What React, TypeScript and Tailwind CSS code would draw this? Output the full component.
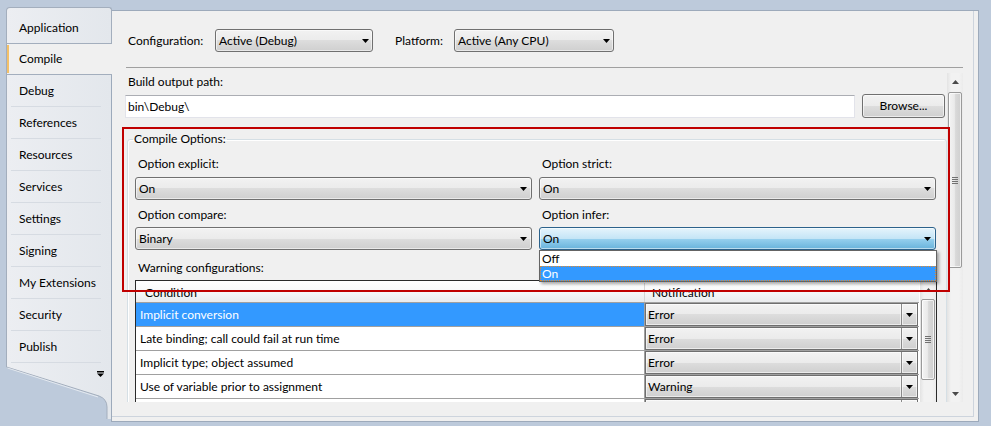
import React from "react";

const GREY =
  "bg-[linear-gradient(to_bottom,#f2f2f2_0%,#ebebeb_50%,#dddddd_50%,#cfcfcf_100%)]";

function Arrow({ color = "#000", w = 7, h = 4, up = false }: { color?: string; w?: number; h?: number; up?: boolean }) {
  return (
    <svg width={w} height={h} viewBox={`0 0 ${w} ${h}`} className="block">
      <path d={up ? `M0 ${h}H${w}L${w / 2} 0Z` : `M0 0H${w}L${w / 2} ${h}Z`} fill={color} />
    </svg>
  );
}

function Combo({ text, className, blue, children, arrowGap = "mr-[4px]" }: { text: string; className: string; blue?: boolean; children?: React.ReactNode; arrowGap?: string }) {
  return (
    <div
      className={`relative flex h-[23px] items-center rounded-[3px] border pl-[3px] shadow-[inset_0_0_0_1px_rgba(255,255,255,0.55)] ${
        blue
          ? "border-[#2c628b] bg-[linear-gradient(to_bottom,#e5f4fc_0%,#c4e5f6_50%,#98d1ef_50%,#68b3db_100%)]"
          : "border-[#707070] " + GREY
      } ${className}`}
    >
      <span className="flex-1 leading-none">{text}</span>
      <span className={arrowGap}>
        <Arrow />
      </span>
      {children}
    </div>
  );
}

function Grip() {
  return (
    <div className="flex flex-col gap-[1px]">
      <div className="h-px w-[6px] bg-[#707070]" />
      <div className="h-px w-[6px] bg-[#707070]" />
      <div className="h-px w-[6px] bg-[#707070]" />
      <div className="h-px w-[6px] bg-[#707070]" />
    </div>
  );
}

function Sidebar() {
  const rows = ["Debug", "References", "Resources", "Services", "Settings", "Signing", "My Extensions", "Security", "Publish"];
  return (
    <div className="relative z-10 flex w-[105px] flex-col">
      <div className="flex h-[36px] w-[106px] items-end rounded-tl-[4px] rounded-tr-[3px] border-l border-r border-t border-[#a3aebd] bg-[linear-gradient(to_right,#eceef2,#e3e7ec)]">
        <div className="flex h-[31px] items-center pl-[12px]">Application</div>
      </div>
      <div className="flex h-[32px] w-[106px] items-center border-y border-l border-[#a3aebd] bg-[#f0f0f0]">
        <div className="my-[1px] mr-[10px] w-[2px] self-stretch bg-[#f3c068]" />
        Compile
      </div>
      <div className="flex flex-col border-l border-[#a3aebd] bg-[linear-gradient(to_right,#eceef2,#e3e7ec)]">
        {rows.map((r) => (
          <div key={r} className="flex h-[32px] flex-col">
            <div className="flex h-[31px] items-center pl-[12px]">{r}</div>
            <div className="ml-[4px] mr-[10px] h-px bg-[#d6dbe2]" />
          </div>
        ))}
      </div>
      <svg width="106" height="56" viewBox="0 0 106 56" className="block">
        <defs>
          <linearGradient id="sb" x1="0" x2="1" y1="0" y2="0">
            <stop offset="0" stopColor="#eceef2" />
            <stop offset="1" stopColor="#e3e7ec" />
          </linearGradient>
        </defs>
        <path d="M0.5 0 V4 L93 33 Q101 36 101 44 V56 H105 V0 Z" fill="url(#sb)" />
        <path d="M0.5 0 V4 L93 33 Q101 36 101 44 V56" fill="none" stroke="#a3aebd" />
        <path d="M1.5 5 L92 34" fill="none" stroke="#ffffff" strokeOpacity="0.6" />
        <rect x="91" y="8" width="7" height="1.5" fill="#000" />
        <path d="M91 10.5 H98 L94.5 14 Z" fill="#000" />
      </svg>
    </div>
  );
}

function TableRow({ cond, note, selected }: { cond: string; note: string; selected?: boolean }) {
  return (
    <div className="flex h-[24px] border-b border-[#a0a0a0]">
      <div className={`flex w-[508px] items-center pl-[4px] ${selected ? "bg-[#3399ff] text-white" : "bg-white"}`}>{cond}</div>
      <div className="flex w-[274px] border-l border-[#a0a0a0] bg-white">
        <div className={`flex w-[273px] border border-[#6f6f6f] ${GREY}`}>
          <div className="flex flex-1 items-center pl-[2px] shadow-[inset_0_0_0_1px_rgba(255,255,255,0.6)]">{note}</div>
          <div className="flex w-[16px] items-center justify-center border-l border-[#8a8a8a] shadow-[inset_0_0_0_1px_rgba(255,255,255,0.6)]">
            <Arrow />
          </div>
        </div>
      </div>
    </div>
  );
}

function ScrollTrack({ children }: { children: React.ReactNode }) {
  return (
    <div className="flex w-[16px] flex-col bg-[linear-gradient(to_right,#e3e3e3,#f2f2f2_25%,#f2f2f2_75%,#ebebeb)]">{children}</div>
  );
}

function Thumb({ className }: { className: string }) {
  return (
    <div
      className={`ml-[1px] flex w-[14px] items-center justify-center rounded-[2px] border border-[#9a9a9a] bg-[linear-gradient(to_right,#f4f4f4,#eaeaea_45%,#d9d9d9_55%,#cfcfcf)] shadow-[inset_0_0_0_1px_rgba(255,255,255,0.7)] ${className}`}
    >
      <Grip />
    </div>
  );
}

function Panel() {
  return (
    <div className="mt-[3px] h-[412px] w-[868px] border border-[#9daabb] bg-[#f0f0f0]">
      <div className="flex h-[406px] w-[862px] flex-col border-b border-r border-[#cdd4dd]">
        <div className="ml-[16px] mt-[18px] flex h-[23px] items-center">
          <span className="w-[87px]">Configuration:</span>
          <Combo text="Active (Debug)" className="w-[158px]" arrowGap="mr-[3px]" />
          <span className="ml-[22px] w-[59px]">Platform:</span>
          <Combo text="Active (Any CPU)" className="w-[160px]" arrowGap="mr-[3px]" />
        </div>
        <div className="ml-[14px] mt-[15px] h-px w-[837px] bg-[#a0a0a0]" />
        <div className="ml-[8px] mt-[5px] flex h-[329px] w-[843px] overflow-hidden">
          <div className="flex w-[827px] flex-col">
            <div className="flex h-[22px] items-center pl-[8px]">Build output path:</div>
            <div className="mt-[3px] flex items-start pl-[5px]">
              <div className="mt-[1px] flex h-[23px] w-[730px] items-center border border-[#e2e3ea] border-t-[#abadb3] bg-white pl-[2px]">
                {"bin\\Debug\\"}
              </div>
              <div className={`ml-[7px] flex h-[24px] w-[83px] items-center justify-center rounded-[3px] border border-[#707070] ${GREY} shadow-[inset_0_0_0_1px_rgba(255,255,255,0.6)]`}>
                Browse...
              </div>
            </div>
            <fieldset className="ml-[7px] mt-[13px] w-[820px] rounded-[3px] border border-[#d5dfe5] pb-[10px] shadow-[inset_1px_1px_0_#ffffff]">
              <legend className="ml-[5px] h-[16px] px-[1px] leading-[16px]">Compile Options:</legend>
              <div className="pl-[7px]">
                <div className="mt-[6px] grid h-[22px] grid-cols-[397px_397px] gap-x-[7px]">
                  <div className="flex items-center pl-[3px]">Option explicit:</div>
                  <div className="flex items-center pl-[3px]">Option strict:</div>
                </div>
                <div className="mt-[2px] grid grid-cols-[397px_397px] gap-x-[7px]">
                  <Combo text="On" className="w-[397px]" />
                  <Combo text="On" className="w-[397px]" />
                </div>
                <div className="mt-[4px] grid h-[22px] grid-cols-[397px_397px] gap-x-[7px]">
                  <div className="flex items-center pl-[3px]">Option compare:</div>
                  <div className="flex items-center pl-[3px]">Option infer:</div>
                </div>
                <div className="mt-[1px] grid grid-cols-[397px_397px] gap-x-[7px]">
                  <Combo text="Binary" className="w-[397px]" />
                  <Combo text="On" className="z-20 w-[397px]" blue>
                    <div className="absolute left-[-1px] top-[22px] flex w-[398px] flex-col border border-[#646464] bg-white shadow-[2px_2px_3px_rgba(0,0,0,0.35)]">
                      <div className="flex h-[15px] items-center pl-[2px] text-black">Off</div>
                      <div className="flex h-[15px] items-center border border-dotted border-[#e4892c] bg-[#3399ff] pl-[1px] text-white">On</div>
                    </div>
                  </Combo>
                </div>
                <div className="mt-[7px] flex h-[22px] items-center pl-[3px]">Warning configurations:</div>
                <div className="mt-[1px] flex w-[802px] border border-[#2a2a2a] bg-white">
                  <div className="flex w-[783px] flex-col">
                    <div className="flex h-[22px] border-b border-[#a0a0a0] bg-[linear-gradient(to_bottom,#ffffff,#f7f8f9_50%,#e9ebed)] pt-[2px]">
                      <div className="flex w-[508px] items-center pl-[9px]">Condition</div>
                      <div className="flex flex-1 items-center border-l border-[#d5d5d5] pl-[7px]">Notification</div>
                    </div>
                    <TableRow cond="Implicit conversion" note="Error" selected />
                    <TableRow cond="Late binding; call could fail at run time" note="Error" />
                    <TableRow cond="Implicit type; object assumed" note="Error" />
                    <TableRow cond="Use of variable prior to assignment" note="Warning" />
                    <TableRow cond="" note="" />
                  </div>
                  <div className="ml-[1px]">
                    <ScrollTrack>
                      <div className="flex h-[17px] items-center justify-center">
                        <Arrow up color="#4a4a4a" w={7} h={4} />
                      </div>
                      <Thumb className="mt-[1px] h-[81px]" />
                      <div className="h-[40px]" />
                    </ScrollTrack>
                  </div>
                </div>
              </div>
            </fieldset>
          </div>
          <ScrollTrack>
            <div className="flex h-[17px] items-center justify-center">
              <Arrow up color="#4a4a4a" w={7} h={4} />
            </div>
            <Thumb className="mt-[2px] h-[176px]" />
            <div className="flex-1" />
            <div className="flex h-[17px] items-center justify-center">
              <Arrow color="#4a4a4a" w={7} h={4} />
            </div>
          </ScrollTrack>
        </div>
      </div>
    </div>
  );
}

export default function App() {
  return (
    <div className="relative flex h-[426px] w-[991px] items-start overflow-hidden bg-[#bdcadb] pl-[6px] pt-[7px] font-['Lato',sans-serif] text-[12px] text-black">
      <Sidebar />
      <Panel />
      <div className="pointer-events-none absolute left-[122px] top-[127px] z-30 h-[165px] w-[828px] border-2 border-[#c00000]" />
    </div>
  );
}
